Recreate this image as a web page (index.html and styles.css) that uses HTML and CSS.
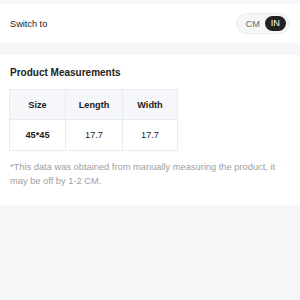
FILE: index.html
```html
<!DOCTYPE html>
<html>
<head>
<meta charset="utf-8">
<link rel="stylesheet" href="styles.css">
</head>
<body>
<div class="page">
  <div class="switch-row">
    <span class="switch-label">Switch to</span>
    <div class="toggle">
      <span class="opt">CM</span>
      <span class="opt active">IN</span>
    </div>
  </div>
  <div class="measure">
    <div class="title">Product Measurements</div>
    <table class="table">
      <thead>
        <tr><th class="c1">Size</th><th class="c2">Length</th><th class="c3">Width</th></tr>
      </thead>
      <tbody>
        <tr><td class="bold">45*45</td><td>17.7</td><td>17.7</td></tr>
      </tbody>
    </table>
    <p class="note">*This data was obtained from manually measuring the product, it may be off by 1-2 CM.</p>
  </div>
</div>
</body>
</html>
```
FILE: styles.css
```css
html, body {
  margin: 0;
  padding: 0;
  background: #f5f6f8;
  font-family: "Liberation Sans", Arial, sans-serif;
  color: #222;
}
.page {
  padding-top: 4px;
}
.switch-row {
  background: #fff;
  height: 39px;
  padding: 0 10px;
  display: flex;
  align-items: center;
  justify-content: space-between;
  box-sizing: border-box;
}
.switch-label {
  font-size: 9.2px;
  color: #222;
}
.toggle {
  display: flex;
  align-items: center;
  background: #f6f6f6;
  border: 1px solid #ececec;
  border-radius: 11px;
  height: 19px;
  padding: 0 3px 0 0;
}
.opt {
  font-size: 9.2px;
  color: #666;
  padding: 0 5px 0 9px;
  line-height: 16px;
}
.opt.active {
  background: #222;
  color: #fff;
  border-radius: 8px;
  padding: 0 6px;
  height: 15px;
  line-height: 15px;
}
.measure {
  background: #fff;
  margin-top: 12px;
  padding: 12px 10px 17px 9px;
}
.title {
  font-size: 10px;
  font-weight: bold;
  line-height: 12px;
  margin: 0 0 10px 1px;
}
.table {
  border-collapse: collapse;
  font-size: 9.2px;
}
.table th, .table td {
  border: 1px solid #e8ebef;
  text-align: center;
  padding: 0;
}
.table th {
  background: #f5f7fa;
  height: 29px;
  font-weight: bold;
}
.table td {
  height: 30px;
}
.table .bold {
  font-weight: bold;
}
.c1 { width: 55px; }
.c2 { width: 56px; }
.c3 { width: 54px; }
.note {
  margin: 9px 0 0 1px;
  font-size: 9.3px;
  line-height: 14px;
  color: #a0a0a0;
}
```
